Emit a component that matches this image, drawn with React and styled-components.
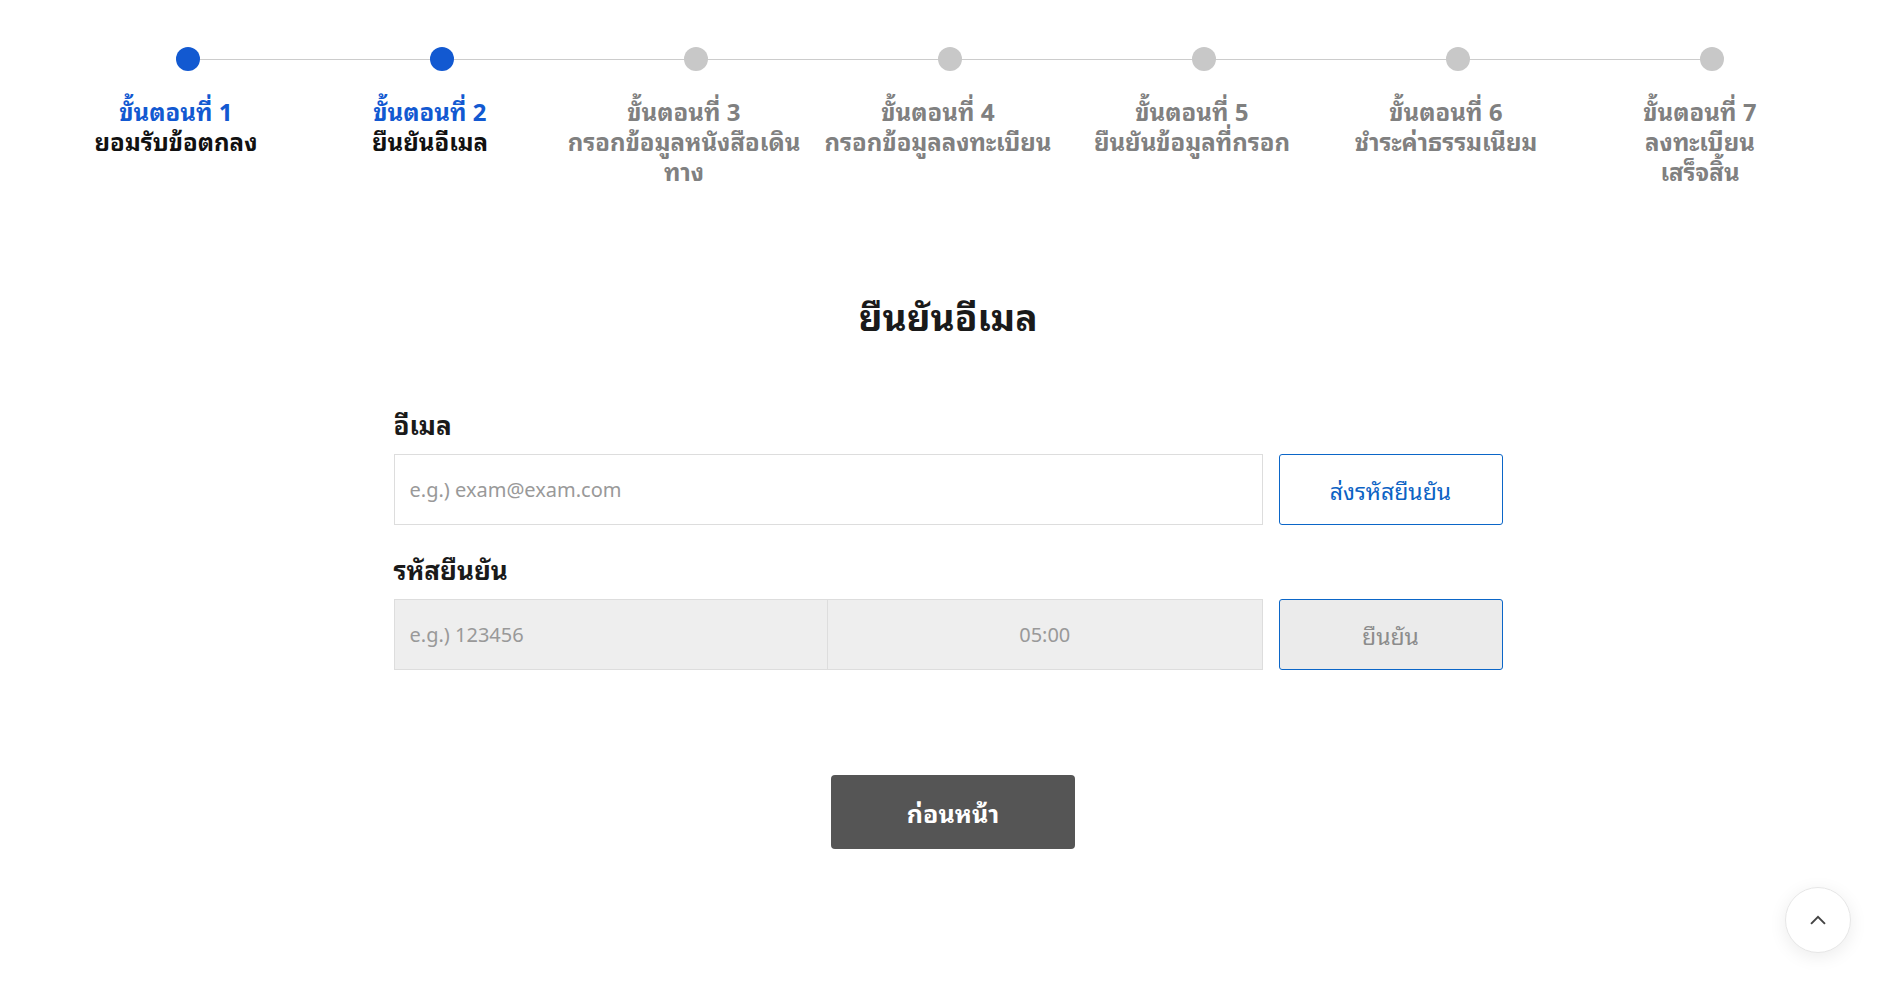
import React from "react";
import styled, { createGlobalStyle } from "styled-components";

const GlobalStyle = createGlobalStyle`
  html, body { margin: 0; padding: 0; background: #ffffff; }
  body {
    font-family: "Noto Sans Thai Looped", "Tahoma", "Loma", "Noto Sans Thai", "Noto Sans", sans-serif;
    color: #111;
  }
  * { box-sizing: border-box; }
`;

const Page = styled.div`
  min-height: 998px;
  padding-top: 47px;
`;

const StepList = styled.ol`
  list-style: none;
  margin: 0 0 0 49px;
  padding: 0;
  width: 1778px;
  display: grid;
  grid-template-columns: repeat(7, 1fr);
`;

const Step = styled.li`
  position: relative;
  display: flex;
  flex-direction: column;
  &::before {
    content: "";
    display: ${(p) => (p.$last ? "none" : "block")};
    position: absolute;
    top: 12px;
    left: calc(50% + 12px);
    width: 100%;
    height: 1px;
    background: #cccccc;
  }
`;

const Dot = styled.span`
  position: relative;
  z-index: 1;
  display: block;
  width: 24px;
  height: 24px;
  margin-left: 50%;
  border-radius: 50%;
  background: ${(p) => (p.$active ? "#1259d1" : "#c8c8c8")};
`;

const StepText = styled.div`
  margin-top: 24px;
  text-align: center;
  font-size: 24px;
  font-weight: 700;
  line-height: 30px;
`;

const StepNo = styled.div`
  color: ${(p) => (p.$active ? "#1259d1" : "#808080")};
`;

const StepName = styled.div`
  color: ${(p) => (p.$active ? "#111111" : "#808080")};
`;

const Title = styled.h1`
  margin: 108px 0 0;
  text-align: center;
  font-size: 37px;
  font-weight: 700;
  line-height: 44px;
  color: #1a1a1a;
`;

const Form = styled.form`
  width: 1109px;
  margin: 70px auto 0;
`;

const FieldLabel = styled.label`
  display: block;
  font-size: 26px;
  font-weight: 700;
  line-height: 32px;
  color: #1a1a1a;
  margin: ${(p) => (p.$first ? "0" : "27px")} 0 15px;
`;

const FieldRow = styled.div`
  display: grid;
  grid-template-columns: 1fr 224px;
  gap: 16px;
  height: 71px;
`;

const Inputs = styled.div`
  display: grid;
  grid-template-columns: ${(p) => (p.$split ? "1fr 1fr" : "1fr")};
`;

const TextInput = styled.input`
  height: 100%;
  width: 100%;
  margin: 0;
  border: 1px solid #dddddd;
  background: ${(p) => (p.$disabled ? "#eeeeee" : "#ffffff")};
  padding: 0 15px;
  font-family: "Noto Sans", "Open Sans", sans-serif;
  font-size: 20px;
  color: #333;
  outline: none;
  &::placeholder { color: #999999; }
`;

const Timer = styled.div`
  display: flex;
  align-items: center;
  justify-content: center;
  border: 1px solid #dddddd;
  border-left: none;
  background: #eeeeee;
  font-family: "Noto Sans", "Open Sans", sans-serif;
  font-size: 20px;
  color: #999999;
`;

const OutlineButton = styled.button`
  height: 100%;
  border: 1px solid #0b66c8;
  border-radius: 3px;
  background: ${(p) => (p.$muted ? "#ebebeb" : "#ffffff")};
  color: ${(p) => (p.$muted ? "#8c8c8c" : "#0b62c4")};
  font-family: inherit;
  font-size: 23px;
  font-weight: 400;
  cursor: pointer;
`;

const Actions = styled.div`
  display: flex;
  justify-content: center;
  margin-top: 105px;
  padding-left: 10px;
`;

const BackButton = styled.button`
  width: 244px;
  height: 74px;
  border: none;
  border-radius: 4px;
  background: #555555;
  color: #ffffff;
  font-family: inherit;
  font-size: 25px;
  font-weight: 700;
  cursor: pointer;
`;

const ScrollTop = styled.button`
  position: fixed;
  right: 45px;
  bottom: 45px;
  width: 66px;
  height: 66px;
  border-radius: 50%;
  border: 1px solid #e6e6e6;
  background: #ffffff;
  box-shadow: 0 4px 18px rgba(0, 0, 0, 0.08);
  display: flex;
  align-items: center;
  justify-content: center;
  padding: 0;
  cursor: pointer;
`;

const steps = [
  { no: "ขั้นตอนที่ 1", name: ["ยอมรับข้อตกลง"], active: true },
  { no: "ขั้นตอนที่ 2", name: ["ยืนยันอีเมล"], active: true },
  { no: "ขั้นตอนที่ 3", name: ["กรอกข้อมูลหนังสือเดิน", "ทาง"] },
  { no: "ขั้นตอนที่ 4", name: ["กรอกข้อมูลลงทะเบียน"] },
  { no: "ขั้นตอนที่ 5", name: ["ยืนยันข้อมูลที่กรอก"] },
  { no: "ขั้นตอนที่ 6", name: ["ชำระค่าธรรมเนียม"] },
  { no: "ขั้นตอนที่ 7", name: ["ลงทะเบียน", "เสร็จสิ้น"] },
];

export default function App() {
  return (
    <Page>
      <GlobalStyle />
      <StepList>
        {steps.map((s, i) => (
          <Step key={s.no} $last={i === steps.length - 1}>
            <Dot $active={s.active} />
            <StepText>
              <StepNo $active={s.active}>{s.no}</StepNo>
              {s.name.map((n) => (
                <StepName key={n} $active={s.active}>{n}</StepName>
              ))}
            </StepText>
          </Step>
        ))}
      </StepList>

      <Title>ยืนยันอีเมล</Title>

      <Form onSubmit={(e) => e.preventDefault()}>
        <FieldLabel $first htmlFor="email">อีเมล</FieldLabel>
        <FieldRow>
          <Inputs>
            <TextInput id="email" placeholder="e.g.) exam@exam.com" />
          </Inputs>
          <OutlineButton type="button">ส่งรหัสยืนยัน</OutlineButton>
        </FieldRow>

        <FieldLabel htmlFor="code">รหัสยืนยัน</FieldLabel>
        <FieldRow>
          <Inputs $split>
            <TextInput id="code" $disabled disabled placeholder="e.g.) 123456" />
            <Timer>05:00</Timer>
          </Inputs>
          <OutlineButton type="button" $muted>ยืนยัน</OutlineButton>
        </FieldRow>

        <Actions>
          <BackButton type="button">ก่อนหน้า</BackButton>
        </Actions>
      </Form>

      <ScrollTop type="button" aria-label="scroll to top">
        <svg width="30" height="30" viewBox="0 0 24 24" fill="none" stroke="#444" strokeWidth="1.6" strokeLinecap="square" strokeLinejoin="miter">
          <path d="m17 14.5-5-5-5 5" />
        </svg>
      </ScrollTop>
    </Page>
  );
}
